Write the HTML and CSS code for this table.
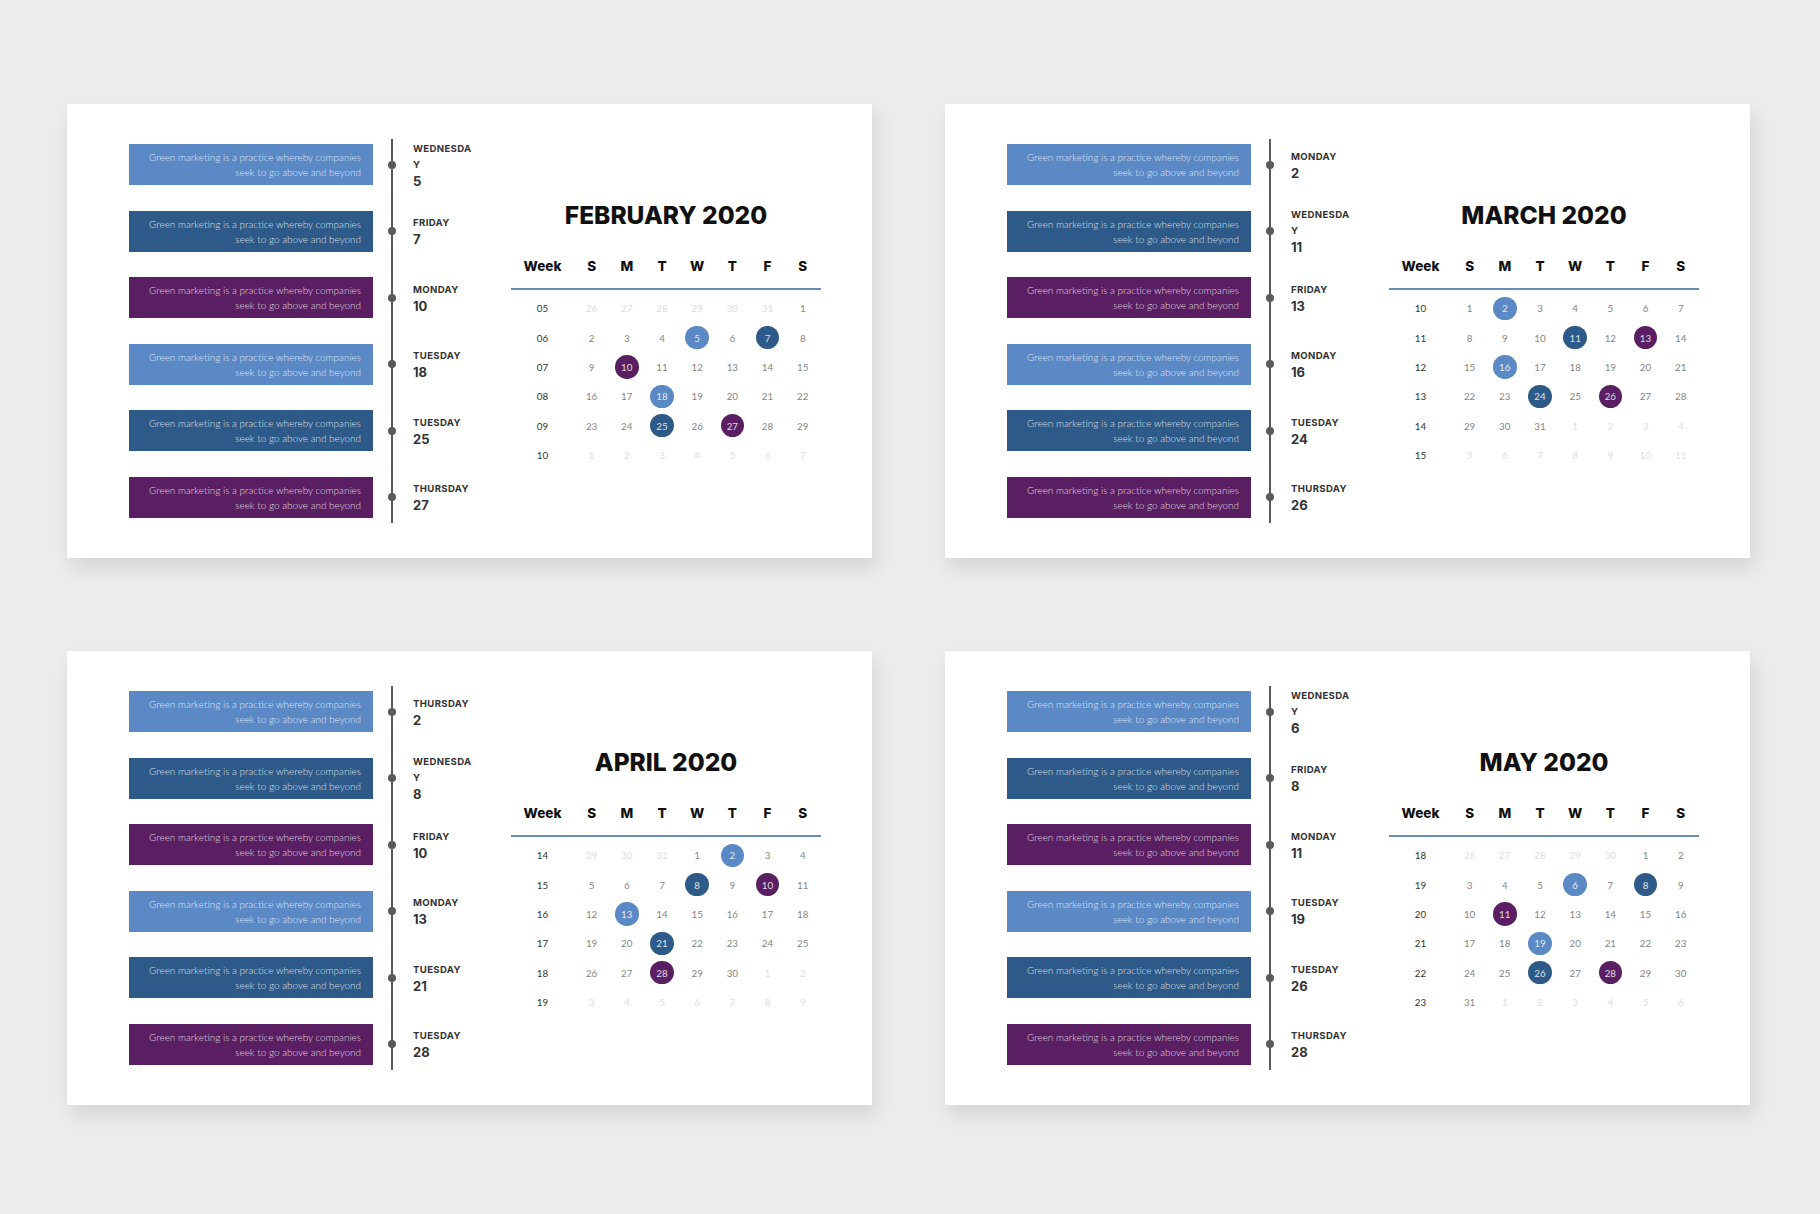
FILE: index.html
```html
<!DOCTYPE html>
<html lang="en">
<head>
<meta charset="utf-8">
<title>Calendar 2020</title>
<link rel="stylesheet" href="styles.css">
</head>
<body>
<main class="board">

  <!-- FEBRUARY -->
  <section class="slide">
    <div class="timeline">
      <div class="item"><div class="box lb"><p>Green marketing is a practice whereby companies seek to go above and beyond</p></div><div class="node"><i class="dot"></i></div><div class="label"><span class="day">WEDNESDAY</span><span class="num">5</span></div></div>
      <div class="item"><div class="box db"><p>Green marketing is a practice whereby companies seek to go above and beyond</p></div><div class="node"><i class="dot"></i></div><div class="label"><span class="day">FRIDAY</span><span class="num">7</span></div></div>
      <div class="item"><div class="box pu"><p>Green marketing is a practice whereby companies seek to go above and beyond</p></div><div class="node"><i class="dot"></i></div><div class="label"><span class="day">MONDAY</span><span class="num">10</span></div></div>
      <div class="item"><div class="box lb"><p>Green marketing is a practice whereby companies seek to go above and beyond</p></div><div class="node"><i class="dot"></i></div><div class="label"><span class="day">TUESDAY</span><span class="num">18</span></div></div>
      <div class="item"><div class="box db"><p>Green marketing is a practice whereby companies seek to go above and beyond</p></div><div class="node"><i class="dot"></i></div><div class="label"><span class="day">TUESDAY</span><span class="num">25</span></div></div>
      <div class="item"><div class="box pu"><p>Green marketing is a practice whereby companies seek to go above and beyond</p></div><div class="node"><i class="dot"></i></div><div class="label"><span class="day">THURSDAY</span><span class="num">27</span></div></div>
    </div>
    <div class="calendar">
      <h2 class="title">FEBRUARY 2020</h2>
      <div class="cal-head"><span>Week</span><span>S</span><span>M</span><span>T</span><span>W</span><span>T</span><span>F</span><span>S</span></div>
      <div class="cal-body">
        <span class="wk">05</span><span class="o">26</span><span class="o">27</span><span class="o">28</span><span class="o">29</span><span class="o">30</span><span class="o">31</span><span>1</span>
        <span class="wk">06</span><span>2</span><span>3</span><span>4</span><span><b class="lb">5</b></span><span>6</span><span><b class="db">7</b></span><span>8</span>
        <span class="wk">07</span><span>9</span><span><b class="pu">10</b></span><span>11</span><span>12</span><span>13</span><span>14</span><span>15</span>
        <span class="wk">08</span><span>16</span><span>17</span><span><b class="lb">18</b></span><span>19</span><span>20</span><span>21</span><span>22</span>
        <span class="wk">09</span><span>23</span><span>24</span><span><b class="db">25</b></span><span>26</span><span><b class="pu">27</b></span><span>28</span><span>29</span>
        <span class="wk">10</span><span class="o">1</span><span class="o">2</span><span class="o">3</span><span class="o">4</span><span class="o">5</span><span class="o">6</span><span class="o">7</span>
      </div>
    </div>
  </section>

  <!-- MARCH -->
  <section class="slide">
    <div class="timeline">
      <div class="item"><div class="box lb"><p>Green marketing is a practice whereby companies seek to go above and beyond</p></div><div class="node"><i class="dot"></i></div><div class="label"><span class="day">MONDAY</span><span class="num">2</span></div></div>
      <div class="item"><div class="box db"><p>Green marketing is a practice whereby companies seek to go above and beyond</p></div><div class="node"><i class="dot"></i></div><div class="label"><span class="day">WEDNESDAY</span><span class="num">11</span></div></div>
      <div class="item"><div class="box pu"><p>Green marketing is a practice whereby companies seek to go above and beyond</p></div><div class="node"><i class="dot"></i></div><div class="label"><span class="day">FRIDAY</span><span class="num">13</span></div></div>
      <div class="item"><div class="box lb"><p>Green marketing is a practice whereby companies seek to go above and beyond</p></div><div class="node"><i class="dot"></i></div><div class="label"><span class="day">MONDAY</span><span class="num">16</span></div></div>
      <div class="item"><div class="box db"><p>Green marketing is a practice whereby companies seek to go above and beyond</p></div><div class="node"><i class="dot"></i></div><div class="label"><span class="day">TUESDAY</span><span class="num">24</span></div></div>
      <div class="item"><div class="box pu"><p>Green marketing is a practice whereby companies seek to go above and beyond</p></div><div class="node"><i class="dot"></i></div><div class="label"><span class="day">THURSDAY</span><span class="num">26</span></div></div>
    </div>
    <div class="calendar">
      <h2 class="title">MARCH 2020</h2>
      <div class="cal-head"><span>Week</span><span>S</span><span>M</span><span>T</span><span>W</span><span>T</span><span>F</span><span>S</span></div>
      <div class="cal-body">
        <span class="wk">10</span><span>1</span><span><b class="lb">2</b></span><span>3</span><span>4</span><span>5</span><span>6</span><span>7</span>
        <span class="wk">11</span><span>8</span><span>9</span><span>10</span><span><b class="db">11</b></span><span>12</span><span><b class="pu">13</b></span><span>14</span>
        <span class="wk">12</span><span>15</span><span><b class="lb">16</b></span><span>17</span><span>18</span><span>19</span><span>20</span><span>21</span>
        <span class="wk">13</span><span>22</span><span>23</span><span><b class="db">24</b></span><span>25</span><span><b class="pu">26</b></span><span>27</span><span>28</span>
        <span class="wk">14</span><span>29</span><span>30</span><span>31</span><span class="o">1</span><span class="o">2</span><span class="o">3</span><span class="o">4</span>
        <span class="wk">15</span><span class="o">5</span><span class="o">6</span><span class="o">7</span><span class="o">8</span><span class="o">9</span><span class="o">10</span><span class="o">11</span>
      </div>
    </div>
  </section>

  <!-- APRIL -->
  <section class="slide">
    <div class="timeline">
      <div class="item"><div class="box lb"><p>Green marketing is a practice whereby companies seek to go above and beyond</p></div><div class="node"><i class="dot"></i></div><div class="label"><span class="day">THURSDAY</span><span class="num">2</span></div></div>
      <div class="item"><div class="box db"><p>Green marketing is a practice whereby companies seek to go above and beyond</p></div><div class="node"><i class="dot"></i></div><div class="label"><span class="day">WEDNESDAY</span><span class="num">8</span></div></div>
      <div class="item"><div class="box pu"><p>Green marketing is a practice whereby companies seek to go above and beyond</p></div><div class="node"><i class="dot"></i></div><div class="label"><span class="day">FRIDAY</span><span class="num">10</span></div></div>
      <div class="item"><div class="box lb"><p>Green marketing is a practice whereby companies seek to go above and beyond</p></div><div class="node"><i class="dot"></i></div><div class="label"><span class="day">MONDAY</span><span class="num">13</span></div></div>
      <div class="item"><div class="box db"><p>Green marketing is a practice whereby companies seek to go above and beyond</p></div><div class="node"><i class="dot"></i></div><div class="label"><span class="day">TUESDAY</span><span class="num">21</span></div></div>
      <div class="item"><div class="box pu"><p>Green marketing is a practice whereby companies seek to go above and beyond</p></div><div class="node"><i class="dot"></i></div><div class="label"><span class="day">TUESDAY</span><span class="num">28</span></div></div>
    </div>
    <div class="calendar">
      <h2 class="title">APRIL 2020</h2>
      <div class="cal-head"><span>Week</span><span>S</span><span>M</span><span>T</span><span>W</span><span>T</span><span>F</span><span>S</span></div>
      <div class="cal-body">
        <span class="wk">14</span><span class="o">29</span><span class="o">30</span><span class="o">31</span><span>1</span><span><b class="lb">2</b></span><span>3</span><span>4</span>
        <span class="wk">15</span><span>5</span><span>6</span><span>7</span><span><b class="db">8</b></span><span>9</span><span><b class="pu">10</b></span><span>11</span>
        <span class="wk">16</span><span>12</span><span><b class="lb">13</b></span><span>14</span><span>15</span><span>16</span><span>17</span><span>18</span>
        <span class="wk">17</span><span>19</span><span>20</span><span><b class="db">21</b></span><span>22</span><span>23</span><span>24</span><span>25</span>
        <span class="wk">18</span><span>26</span><span>27</span><span><b class="pu">28</b></span><span>29</span><span>30</span><span class="o">1</span><span class="o">2</span>
        <span class="wk">19</span><span class="o">3</span><span class="o">4</span><span class="o">5</span><span class="o">6</span><span class="o">7</span><span class="o">8</span><span class="o">9</span>
      </div>
    </div>
  </section>

  <!-- MAY -->
  <section class="slide">
    <div class="timeline">
      <div class="item"><div class="box lb"><p>Green marketing is a practice whereby companies seek to go above and beyond</p></div><div class="node"><i class="dot"></i></div><div class="label"><span class="day">WEDNESDAY</span><span class="num">6</span></div></div>
      <div class="item"><div class="box db"><p>Green marketing is a practice whereby companies seek to go above and beyond</p></div><div class="node"><i class="dot"></i></div><div class="label"><span class="day">FRIDAY</span><span class="num">8</span></div></div>
      <div class="item"><div class="box pu"><p>Green marketing is a practice whereby companies seek to go above and beyond</p></div><div class="node"><i class="dot"></i></div><div class="label"><span class="day">MONDAY</span><span class="num">11</span></div></div>
      <div class="item"><div class="box lb"><p>Green marketing is a practice whereby companies seek to go above and beyond</p></div><div class="node"><i class="dot"></i></div><div class="label"><span class="day">TUESDAY</span><span class="num">19</span></div></div>
      <div class="item"><div class="box db"><p>Green marketing is a practice whereby companies seek to go above and beyond</p></div><div class="node"><i class="dot"></i></div><div class="label"><span class="day">TUESDAY</span><span class="num">26</span></div></div>
      <div class="item"><div class="box pu"><p>Green marketing is a practice whereby companies seek to go above and beyond</p></div><div class="node"><i class="dot"></i></div><div class="label"><span class="day">THURSDAY</span><span class="num">28</span></div></div>
    </div>
    <div class="calendar">
      <h2 class="title">MAY 2020</h2>
      <div class="cal-head"><span>Week</span><span>S</span><span>M</span><span>T</span><span>W</span><span>T</span><span>F</span><span>S</span></div>
      <div class="cal-body">
        <span class="wk">18</span><span class="o">26</span><span class="o">27</span><span class="o">28</span><span class="o">29</span><span class="o">30</span><span>1</span><span>2</span>
        <span class="wk">19</span><span>3</span><span>4</span><span>5</span><span><b class="lb">6</b></span><span>7</span><span><b class="db">8</b></span><span>9</span>
        <span class="wk">20</span><span>10</span><span><b class="pu">11</b></span><span>12</span><span>13</span><span>14</span><span>15</span><span>16</span>
        <span class="wk">21</span><span>17</span><span>18</span><span><b class="lb">19</b></span><span>20</span><span>21</span><span>22</span><span>23</span>
        <span class="wk">22</span><span>24</span><span>25</span><span><b class="db">26</b></span><span>27</span><span><b class="pu">28</b></span><span>29</span><span>30</span>
        <span class="wk">23</span><span>31</span><span class="o">1</span><span class="o">2</span><span class="o">3</span><span class="o">4</span><span class="o">5</span><span class="o">6</span>
      </div>
    </div>
  </section>

</main>
</body>
</html>
```

FILE: styles.css
```css
* { box-sizing: border-box; }

html, body {
  margin: 0;
  padding: 0;
  background: #ececec;
}

body {
  width: 1820px;
  height: 1214px;
  overflow: hidden;
  font-family: "Lato", "Open Sans", sans-serif;
}

.board {
  display: grid;
  grid-template-columns: 805px 805px;
  grid-template-rows: 454px 454px;
  column-gap: 73px;
  row-gap: 93px;
  padding: 104px 0 0 67px;
}

.slide {
  background: #ffffff;
  display: flex;
  align-items: flex-start;
  box-shadow: 4px 10px 18px rgba(0, 0, 0, 0.10);
}

/* ---------- timeline ---------- */
.timeline {
  width: 382px;
  margin: 35px 0 0 62px;
  padding: 5px 0 5px;
  display: flex;
  flex-direction: column;
  gap: 25.5px;
  background: linear-gradient(#5a5a5a, #5a5a5a) no-repeat 262px 0 / 2px 100%;
}

.item {
  display: flex;
  align-items: center;
  height: 41px;
}

.box {
  width: 244px;
  height: 41px;
  flex: none;
  display: flex;
  align-items: center;
  justify-content: flex-end;
  padding: 1px 12px 0;
}

.box p {
  margin: 0;
  text-align: right;
  font-family: "Lato", sans-serif;
  font-weight: 300;
  font-size: 9.95px;
  line-height: 15px;
  color: rgba(255, 255, 255, 0.82);
}

.box.lb { background: #5a89c6; }
.box.db { background: #2d5a88; }
.box.pu { background: #5a1e62; }

.node {
  width: 38px;
  flex: none;
  display: flex;
  justify-content: center;
}

.dot {
  display: block;
  width: 8px;
  height: 8px;
  border-radius: 50%;
  background: #5a5a5a;
}

.label {
  display: flex;
  flex-direction: column;
  width: 62px;
  padding-left: 2px;
  color: #333333;
  font-family: "Inter", "Roboto", sans-serif;
  font-weight: 700;
  line-height: 16px;
}

.day {
  font-size: 9.6px;
  letter-spacing: 0.35px;
  overflow-wrap: anywhere;
}

.num {
  font-size: 13px;
}

/* ---------- calendar ---------- */
.calendar {
  width: 310px;
  padding-top: 96px;
}

.title {
  margin: 0;
  text-align: center;
  font-family: "Inter", sans-serif;
  font-weight: 800;
  font-size: 24.5px;
  line-height: 30px;
  color: #111111;
}

.cal-head,
.cal-body {
  display: grid;
  grid-template-columns: 63px repeat(7, 35.2px);
}

.cal-head {
  margin-top: 24px;
  height: 35.5px;
  padding-bottom: 9.5px;
  border-bottom: 2px solid #6a8db9;
  font-family: "Inter", sans-serif;
  font-weight: 800;
  font-size: 13.5px;
  color: #111111;
}

.cal-head span {
  display: flex;
  align-items: center;
  justify-content: center;
}

.cal-body {
  margin-top: 4.3px;
  grid-auto-rows: 29.3px;
  font-family: "Lato", sans-serif;
  font-size: 9.8px;
  color: #858585;
}

.cal-body span {
  display: flex;
  align-items: center;
  justify-content: center;
}

.cal-body .wk { color: #333333; }
.cal-body .o { color: #dddddd; }

.cal-body b {
  display: flex;
  align-items: center;
  justify-content: center;
  width: 23.5px;
  height: 23.5px;
  border-radius: 50%;
  font-weight: 400;
  color: rgba(255, 255, 255, 0.85);
}

.cal-body b.lb { background: #5a89c6; }
.cal-body b.db { background: #2d5a88; }
.cal-body b.pu { background: #5a1e62; }
```
